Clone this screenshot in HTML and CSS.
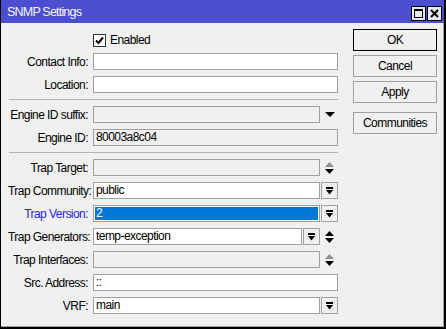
FILE: index.html
```html
<!DOCTYPE html>
<html lang="en">
<head>
  <meta charset="UTF-8">
  <title>SNMP Settings</title>
  <link rel="stylesheet" href="styles.css">
</head>
<body>
  <div class="window">
    <div class="titlebar">
      <span class="title">SNMP Settings</span>
      <div class="wbtns">
        <span class="wbtn">
          <svg width="9" height="9" viewBox="0 0 9 9"><rect x="0.5" y="0.5" width="8" height="8" fill="none" stroke="#000"/><rect x="0" y="0" width="9" height="2" fill="#000"/></svg>
        </span>
        <span class="wbtn">
          <svg width="9" height="9" viewBox="0 0 9 9"><path d="M1 1 L8 8 M8 1 L1 8" stroke="#000" stroke-width="2"/></svg>
        </span>
      </div>
    </div>

    <div class="content">
      <div class="form">
        <div class="row check-row">
          <span class="label"></span>
          <span class="checkbox">
            <svg width="11" height="11" viewBox="0 0 11 11"><path d="M2 5.5 L4.5 8 L9 2.5" fill="none" stroke="#000" stroke-width="2"/></svg>
          </span>
          <span class="check-text">Enabled</span>
        </div>
        <div class="row">
          <span class="label">Contact Info:</span>
          <div class="field"></div>
        </div>
        <div class="row">
          <span class="label">Location:</span>
          <div class="field"></div>
        </div>

        <div class="sep"></div>

        <div class="row">
          <span class="label">Engine ID suffix:</span>
          <div class="field disabled"></div>
          <span class="cell">
            <svg width="10" height="5" viewBox="0 0 10 5"><polygon points="0,0 10,0 5,5" fill="#000"/></svg>
          </span>
        </div>
        <div class="row">
          <span class="label">Engine ID:</span>
          <div class="field disabled">80003a8c04</div>
        </div>

        <div class="sep"></div>

        <div class="row">
          <span class="label">Trap Target:</span>
          <div class="field disabled"></div>
          <span class="cell">
            <svg width="9" height="12" viewBox="0 0 9 12"><polygon points="4.5,0 9,5 0,5" fill="#8c948c"/><polygon points="0,7 9,7 4.5,12" fill="#000"/></svg>
          </span>
        </div>
        <div class="row">
          <span class="label">Trap Community:</span>
          <div class="field">public</div>
          <span class="btn-drop">
            <svg width="7" height="8" viewBox="0 0 7 8"><rect x="0" y="0" width="7" height="2" fill="#000"/><polygon points="0,3 7,3 3.5,7.5" fill="#000"/></svg>
          </span>
        </div>
        <div class="row">
          <span class="label active">Trap Version:</span>
          <div class="field selected">2</div>
          <span class="btn-drop">
            <svg width="7" height="8" viewBox="0 0 7 8"><rect x="0" y="0" width="7" height="2" fill="#000"/><polygon points="0,3 7,3 3.5,7.5" fill="#000"/></svg>
          </span>
        </div>
        <div class="row">
          <span class="label">Trap Generators:</span>
          <div class="field">temp-exception</div>
          <span class="btn-drop">
            <svg width="7" height="8" viewBox="0 0 7 8"><rect x="0" y="0" width="7" height="2" fill="#000"/><polygon points="0,3 7,3 3.5,7.5" fill="#000"/></svg>
          </span>
          <span class="cell">
            <svg width="9" height="12" viewBox="0 0 9 12"><polygon points="4.5,0 9,5 0,5" fill="#000"/><polygon points="0,7 9,7 4.5,12" fill="#000"/></svg>
          </span>
        </div>
        <div class="row">
          <span class="label">Trap Interfaces:</span>
          <div class="field disabled"></div>
          <span class="cell">
            <svg width="9" height="12" viewBox="0 0 9 12"><polygon points="4.5,0 9,5 0,5" fill="#8c948c"/><polygon points="0,7 9,7 4.5,12" fill="#000"/></svg>
          </span>
        </div>
        <div class="row">
          <span class="label">Src. Address:</span>
          <div class="field">::</div>
        </div>
        <div class="row">
          <span class="label">VRF:</span>
          <div class="field">main</div>
          <span class="btn-drop">
            <svg width="7" height="8" viewBox="0 0 7 8"><rect x="0" y="0" width="7" height="2" fill="#000"/><polygon points="0,3 7,3 3.5,7.5" fill="#000"/></svg>
          </span>
        </div>
      </div>

      <div class="actions">
        <button class="default">OK</button>
        <button>Cancel</button>
        <button>Apply</button>
        <button class="spaced">Communities</button>
      </div>
    </div>
  </div>
</body>
</html>
```

FILE: styles.css
```css
body {
  margin: 0;
  font-family: "Liberation Sans", Arial, sans-serif;
  font-size: 12px;
  letter-spacing: -0.55px;
  color: #000;
  background-color: #f0f0f0;
}

.window {
  width: 443px;
  height: 327px;
  background-color: #f0f0f0;
  border-left: 1px solid #000;
  border-right: 2px solid #000;
  border-bottom: 2px solid #000;
  box-shadow: inset -1px -1px 0 #a0a0a0;
}

.titlebar {
  height: 23px;
  background-color: #4b4ecf;
  display: flex;
  align-items: center;
  justify-content: space-between;
  padding: 0 2px 0 6px;
}

.title {
  color: #f4f4ff;
  font-size: 12.5px;
  letter-spacing: -0.8px;
}

.wbtns {
  display: flex;
  margin-top: 3px;
}

.wbtn {
  width: 13px;
  height: 13px;
  border: 1px solid #000;
  background-color: #e8e8e8;
  display: flex;
  align-items: center;
  justify-content: center;
  margin-left: 1px;
}

.content {
  display: flex;
}

.form {
  width: 330px;
  margin-left: 7px;
  padding-top: 7px;
}

.row {
  display: flex;
  align-items: center;
  height: 17px;
  margin-bottom: 6px;
}

.label {
  width: 80px;
  flex: none;
  text-align: right;
  margin-right: 5px;
  white-space: nowrap;
}

.label.active {
  color: #2424dc;
}

.check-row {
  align-items: flex-end;
}

.checkbox {
  width: 11px;
  height: 11px;
  border: 1px solid #333;
  background-color: #fff;
  display: flex;
  align-items: center;
  justify-content: center;
}

.check-text {
  margin-left: 4px;
  line-height: 13px;
}

.sep {
  height: 0;
  border-top: 1px solid #b4b4b4;
  margin: 1px 0 6px 1px;
}

.field {
  flex: 1;
  height: 15px;
  border: 1px solid #a0a0a0;
  background-color: #fff;
  padding-left: 2px;
  line-height: 15px;
  white-space: nowrap;
  overflow: hidden;
}

.field.disabled {
  background-color: #f0f0f0;
}

.field.selected {
  background-color: #0078d7;
  color: #fff;
  box-shadow: inset 0 0 0 1px #fff;
}

.cell {
  width: 17px;
  height: 17px;
  margin-left: 1px;
  flex: none;
  display: flex;
  align-items: center;
  justify-content: center;
}

.btn-drop {
  width: 15px;
  height: 15px;
  margin-left: 1px;
  flex: none;
  border: 1px solid #a0a0a0;
  background-color: #f0f0f0;
  display: flex;
  align-items: center;
  justify-content: center;
}

.actions {
  margin-left: 15px;
  padding-top: 6px;
  display: flex;
  flex-direction: column;
}

.actions button {
  width: 84px;
  height: 22px;
  margin-bottom: 4px;
  padding: 0;
  border: 1px solid #a0a0a0;
  background-color: #f0f0f0;
  font-family: inherit;
  font-size: 12px;
  letter-spacing: -0.55px;
  color: #000;
}

.actions button.default {
  border-color: #000;
}

.actions button.spaced {
  margin-top: 5px;
}
```
